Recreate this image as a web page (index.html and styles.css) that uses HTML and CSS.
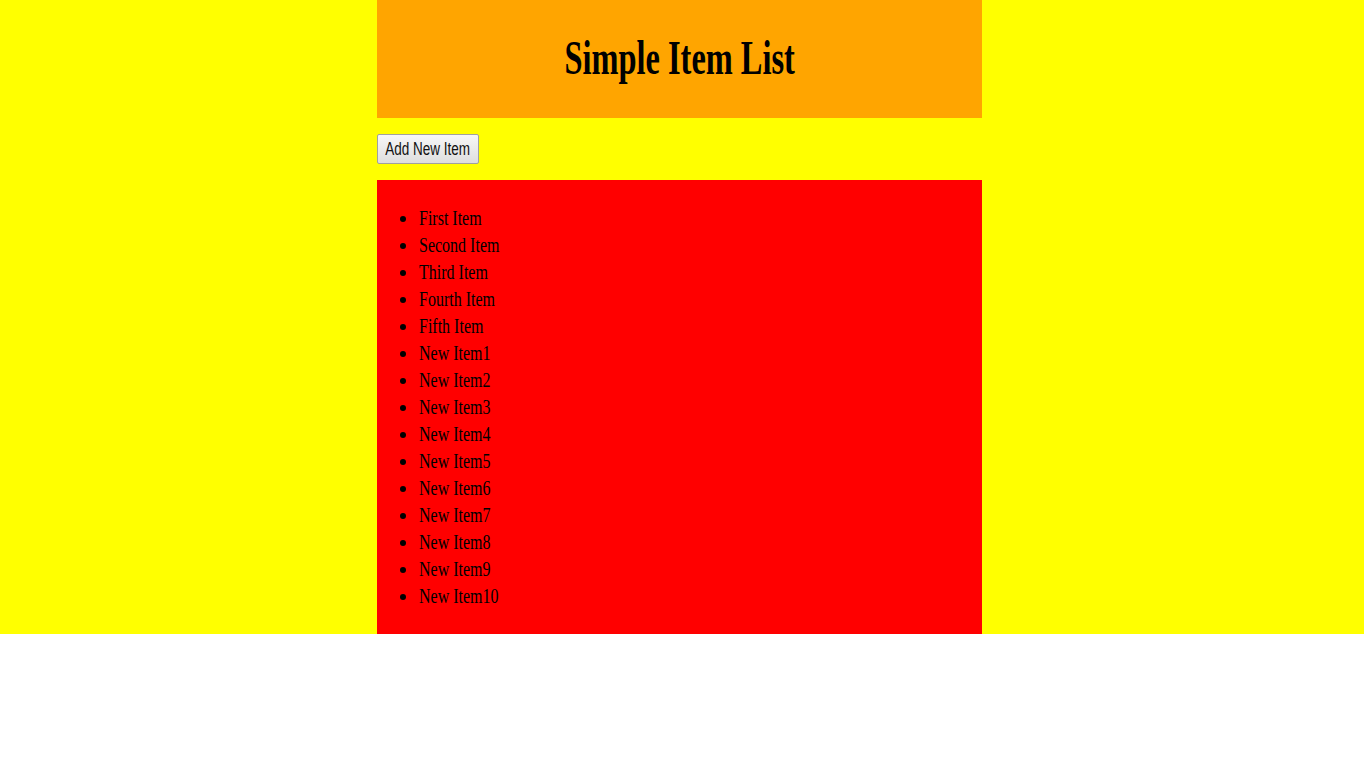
FILE: index.html
```html
<!DOCTYPE html>
<html>
<head>
<meta charset="utf-8">
<title>Simple Item List</title>
<link rel="stylesheet" href="styles.css">
</head>
<body>
<div class="page">
  <div class="container">
    <header class="header"><h1 class="title"><span class="squeeze-h">Simple Item List</span></h1></header>
    <div class="actions">
      <button class="add-btn" type="button"><span class="squeeze-b">Add New Item</span></button>
    </div>
    <div class="list-box">
      <ul class="items">
        <li><span class="squeeze">First Item</span></li>
        <li><span class="squeeze">Second Item</span></li>
        <li><span class="squeeze">Third Item</span></li>
        <li><span class="squeeze">Fourth Item</span></li>
        <li><span class="squeeze">Fifth Item</span></li>
        <li><span class="squeeze">New Item1</span></li>
        <li><span class="squeeze">New Item2</span></li>
        <li><span class="squeeze">New Item3</span></li>
        <li><span class="squeeze">New Item4</span></li>
        <li><span class="squeeze">New Item5</span></li>
        <li><span class="squeeze">New Item6</span></li>
        <li><span class="squeeze">New Item7</span></li>
        <li><span class="squeeze">New Item8</span></li>
        <li><span class="squeeze">New Item9</span></li>
        <li><span class="squeeze">New Item10</span></li>
      </ul>
    </div>
  </div>
</div>
</body>
</html>
```
FILE: styles.css
```css
html, body {
  margin: 0;
  padding: 0;
  background: #ffffff;
}
body {
  font-family: "Liberation Serif", "Times New Roman", serif;
  color: #000;
}
.page {
  width: 1364px;
  height: 634px;
  background: #ffff00;
  overflow: hidden;
}
.container {
  width: 605px;
  margin-left: 377px;
  display: flex;
  flex-direction: column;
}
.header {
  height: 118px;
  background: #ffa500;
  display: flex;
  align-items: center;
  justify-content: center;
}
.title {
  margin: 0;
  font-size: 48px;
  font-weight: bold;
  line-height: 1;
  padding-bottom: 2px;
  display: flex;
  justify-content: center;
  white-space: nowrap;
}
.squeeze-h {
  display: inline-block;
  transform: scaleX(0.675);
  transform-origin: center;
}
.actions {
  height: 62px;
  display: flex;
  align-items: center;
}
.add-btn {
  width: 102px;
  height: 30px;
  padding: 0;
  margin: 0;
  display: flex;
  align-items: center;
  justify-content: center;
  overflow: visible;
  white-space: nowrap;
  font-family: "Liberation Sans", Arial, sans-serif;
  font-size: 18px;
  color: #111;
  background: linear-gradient(#f7f7f7, #dedede);
  border: 1px solid #a0a0a0;
  border-radius: 2px;
}
.squeeze-b {
  display: inline-block;
  transform: scaleX(0.75);
  transform-origin: center;
}
.list-box {
  height: 454px;
  background: #ff0000;
  box-sizing: border-box;
  padding-top: 25px;
}
.items {
  margin: 0;
  padding-left: 42px;
  font-size: 20px;
  line-height: 27px;
}
.squeeze {
  display: inline-block;
  transform: scaleX(0.8);
  transform-origin: left center;
  white-space: nowrap;
}
```
